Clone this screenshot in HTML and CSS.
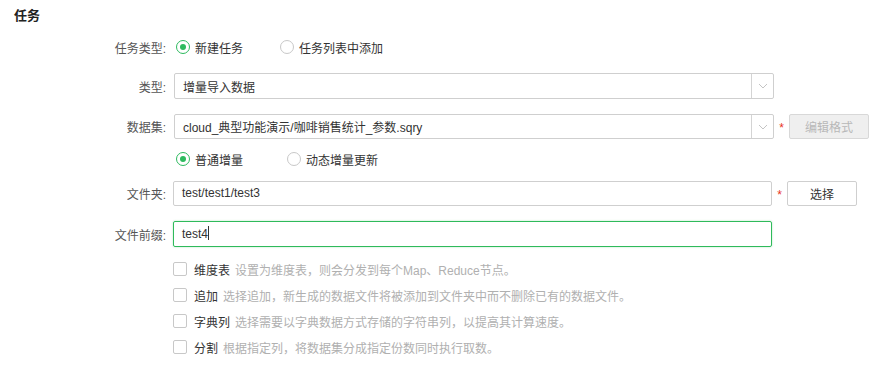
FILE: index.html
```html
<!DOCTYPE html>
<html>
<head>
  <meta charset="utf-8">
  <title>任务</title>
  <link rel="stylesheet" href="styles.css">
</head>
<body>
  <div class="page">
    <div class="section-title">任务</div>

    <!-- 任务类型 -->
    <div class="row row-type">
      <div class="label">任务类型:</div>
      <div class="field">
        <label class="radio checked"><span class="dot"></span>新建任务</label>
        <label class="radio radio-second"><span class="dot"></span>任务列表中添加</label>
      </div>
    </div>

    <div class="row row-kind">
      <div class="label">类型:</div>
      <div class="field">
        <div class="select">
          <span class="value">增量导入数据</span>
          <span class="arrow"><svg width="10" height="6" viewBox="0 0 10 6"><path d="M1 1 L5 5 L9 1" fill="none" stroke="#c4c4c4" stroke-width="1"/></svg></span>
        </div>
      </div>
    </div>

    <div class="row row-dataset">
      <div class="label">数据集:</div>
      <div class="field">
        <div class="select">
          <span class="value">cloud_典型功能演示/咖啡销售统计_参数.sqry</span>
          <span class="arrow"><svg width="10" height="6" viewBox="0 0 10 6"><path d="M1 1 L5 5 L9 1" fill="none" stroke="#c4c4c4" stroke-width="1"/></svg></span>
        </div>
        <span class="required">*</span>
        <button class="btn disabled" type="button">编辑格式</button>
      </div>
    </div>

    <div class="row row-mode">
      <div class="label"></div>
      <div class="field">
        <label class="radio checked"><span class="dot"></span>普通增量</label>
        <label class="radio radio-dynamic"><span class="dot"></span>动态增量更新</label>
      </div>
    </div>

    <div class="row row-folder">
      <div class="label">文件夹:</div>
      <div class="field">
        <div class="input">test/test1/test3</div>
        <span class="required">*</span>
        <button class="btn" type="button">选择</button>
      </div>
    </div>

    <div class="row row-prefix">
      <div class="label">文件前缀:</div>
      <div class="field">
        <div class="input focused">test4<span class="caret"></span></div>
      </div>
    </div>

    <div class="options">
      <div class="option"><span class="box"></span><b>维度表</b><span class="desc">设置为维度表，则会分发到每个Map、Reduce节点。</span></div>
      <div class="option"><span class="box"></span><b>追加</b><span class="desc">选择追加，新生成的数据文件将被添加到文件夹中而不删除已有的数据文件。</span></div>
      <div class="option"><span class="box"></span><b>字典列</b><span class="desc">选择需要以字典数据方式存储的字符串列，以提高其计算速度。</span></div>
      <div class="option"><span class="box"></span><b>分割</b><span class="desc">根据指定列，将数据集分成指定份数同时执行取数。</span></div>
    </div>
  </div>
</body>
</html>
```

FILE: styles.css
```css
body {
  margin: 0;
  background: #fff;
  font-family: "Liberation Sans", "Noto Sans CJK SC", sans-serif;
  font-size: 12px;
  color: #333;
}

.page {
  padding-top: 8px;
}

.section-title {
  padding-left: 14px;
  font-size: 13px;
  font-weight: bold;
  line-height: 16px;
  color: #222;
}

/* form rows */
.row {
  display: flex;
  align-items: center;
}

.label {
  width: 166px;
  text-align: right;
  color: #555;
  flex-shrink: 0;
}

.field {
  display: flex;
  align-items: center;
  margin-left: 8px;
}

.row-type {
  margin-top: 13px;
  height: 20px;
}

.row-kind {
  margin-top: 16px;
  height: 26px;
}

.row-dataset {
  margin-top: 15px;
  height: 25px;
}

.row-mode {
  margin-top: 10px;
  height: 20px;
}

.row-folder {
  margin-top: 12px;
  height: 25px;
}

.row-prefix {
  margin-top: 15px;
  height: 26px;
}

/* radios */
.radio {
  display: flex;
  align-items: center;
  color: #333;
  margin-left: 2px;
}

.radio .dot {
  width: 12px;
  height: 12px;
  border: 1px solid #c8c8c8;
  border-radius: 50%;
  margin-right: 5px;
  position: relative;
}

.radio.checked .dot {
  border-color: #2dba5e;
}

.radio.checked .dot::after {
  content: "";
  position: absolute;
  left: 3px;
  top: 3px;
  width: 6px;
  height: 6px;
  border-radius: 50%;
  background: #2dba5e;
}

.radio-second {
  margin-left: 37px;
}

.radio-dynamic {
  margin-left: 44px;
}

/* select + inputs */
.select {
  width: 598px;
  height: 24px;
  border: 1px solid #cfcfcf;
  border-radius: 2px;
  display: flex;
  align-items: center;
}

.select .value {
  flex: 1;
  padding-left: 8px;
}

.select .arrow {
  width: 21px;
  height: 100%;
  border-left: 1px solid #d4d4d4;
  display: flex;
  align-items: center;
  justify-content: center;
}

.row-dataset .select {
  height: 23px;
}

.input {
  width: 589px;
  height: 23px;
  line-height: 23px;
  border: 1px solid #cfcfcf;
  border-radius: 2px;
  padding-left: 8px;
  margin-left: -1px;
}

.input.focused {
  height: 24px;
  line-height: 24px;
  border-color: #2fba5b;
  box-shadow: 0 0 2px rgba(47, 186, 91, 0.4);
}

.caret {
  display: inline-block;
  width: 1px;
  height: 14px;
  background: #333;
  vertical-align: -2px;
}

.required {
  color: #e8331c;
  width: 15px;
  text-align: center;
  font-size: 12px;
  padding-top: 3px;
}

.btn {
  font-family: inherit;
  font-size: 12px;
  height: 25px;
  width: 70px;
  background: #fff;
  border: 1px solid #cfcfcf;
  border-radius: 2px;
  color: #333;
  padding: 0;
}

.btn.disabled {
  width: 80px;
  background: #efefef;
  border-color: #d8d8d8;
  color: #b8b8b8;
}

/* checkbox options */
.options {
  margin-top: 9px;
  padding-left: 173px;
}

.option {
  height: 26px;
  display: flex;
  align-items: center;
}

.option .box {
  width: 12px;
  height: 12px;
  border: 1px solid #c8c8c8;
  border-radius: 2px;
  margin-right: 7px;
}

.option b {
  font-weight: normal;
  color: #333;
  margin-right: 5px;
}

.option .desc {
  color: #b0b0b0;
}
```
